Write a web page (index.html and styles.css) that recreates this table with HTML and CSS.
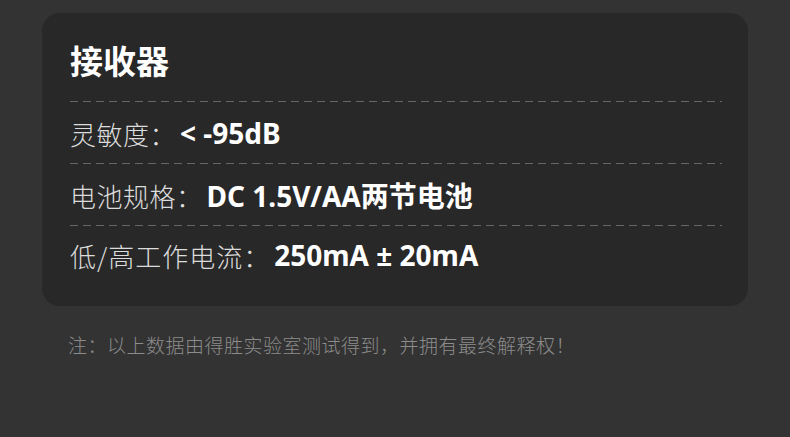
FILE: index.html
```html
<!DOCTYPE html>
<html lang="zh">
<head>
<meta charset="utf-8">
<link rel="stylesheet" href="styles.css">
</head>
<body>
<div class="page">
  <div class="card">
    <div class="title">接收器</div>
    <div class="dash"></div>
    <div class="row"><span class="label">灵敏度：</span><span class="value">&lt; -95dB</span></div>
    <div class="dash"></div>
    <div class="row"><span class="label">电池规格：</span><span class="value">DC 1.5V/AA两节电池</span></div>
    <div class="dash"></div>
    <div class="row last"><span class="label">低/高工作电流：</span><span class="value">250mA ± 20mA</span></div>
  </div>
  <div class="note">注：以上数据由得胜实验室测试得到，并拥有最终解释权！</div>
</div>
</body>
</html>
```
FILE: styles.css
```css
html, body {
  margin: 0;
  padding: 0;
  background: #333333;
}
body {
  font-family: "Noto Sans", "Noto Sans CJK SC", sans-serif;
  width: 790px;
  height: 437px;
  overflow: hidden;
}
.page {
  padding: 13px 42px 0 42px;
}
.card {
  background: #282828;
  border-radius: 18px;
  padding: 0 26px 19px 28px;
}
.title {
  height: 82px;
  padding-top: 6px;
  display: flex;
  align-items: center;
  color: #ffffff;
  font-family: "Noto Sans CJK SC", sans-serif;
  font-weight: 700;
  font-size: 33px;
}
.dash {
  height: 1px;
  background: repeating-linear-gradient(to right, #666666 0 8px, transparent 8px 13px);
}
.row {
  height: 61px;
  display: flex;
  align-items: center;
  padding-top: 1px;
  box-sizing: border-box;
  white-space: nowrap;
}
.row.last {
  padding-top: 0;
  padding-bottom: 3px;
}
.label {
  color: #dcdcdc;
  font-family: "Noto Sans CJK SC", sans-serif;
  font-weight: 300;
  font-size: 26px;
  letter-spacing: 0.5px;
}
.row.last .label {
  letter-spacing: 1px;
}
.value {
  margin-left: 4px;
  color: #ffffff;
  font-weight: 700;
  font-size: 28px;
}
.note {
  margin-top: 26px;
  padding-left: 26px;
  color: #8c8c8c;
  font-family: "Noto Sans CJK SC", sans-serif;
  font-weight: 300;
  font-size: 19px;
  letter-spacing: 0.5px;
  line-height: 26px;
}
```
